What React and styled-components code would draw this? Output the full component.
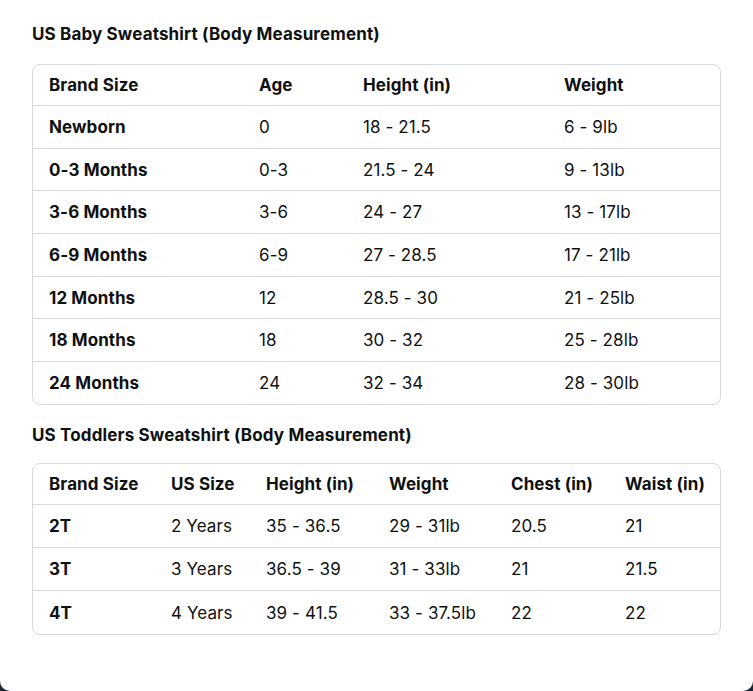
import React from "react";
import styled, { createGlobalStyle } from "styled-components";

const GlobalStyle = createGlobalStyle`
    html, body {
        margin: 0;
        padding: 0;
        background: #1c2631;
    }
`;

const Panel = styled.div`
    box-sizing: border-box;
    width: 753px;
    height: 691px;
    background: #ffffff;
    border-radius: 0 0 10px 10px;
    padding: 24px 32px 0;
    font-family: Inter, "Noto Sans", "Liberation Sans", sans-serif;
    color: #0f1111;
`;

const Heading = styled.h3`
    margin: ${p => (p.$first ? "0" : "20px")} 0 ${p => (p.$first ? "20px" : "18px")};
    font-size: 17px;
    line-height: 20px;
    font-weight: 700;
    letter-spacing: 0.15px;
`;

const TableBox = styled.div`
    border: 1px solid #d5d9d9;
    border-radius: 8px;
    overflow: hidden;
`;

const Table = styled.table`
    width: 100%;
    border-collapse: collapse;
    table-layout: fixed;
    font-size: 17px;
    letter-spacing: 0.1px;
`;

const Row = styled.tr`
    & + & td {
        border-top: 1px solid #d5d9d9;
    }
`;

const HeadCell = styled.th`
    height: 40px;
    padding: 0 0 0 16px;
    text-align: left;
    font-weight: 700;
    white-space: nowrap;
    border-bottom: 1px solid #d5d9d9;
`;

const Cell = styled.td`
    height: ${p => p.$h}px;
    padding: 0 0 0 16px;
    text-align: left;
    font-weight: ${p => (p.$bold ? 700 : 400)};
    white-space: nowrap;
`;

const SizeTable = ({ widths, head, rows, rowHeight }) => (
    <TableBox>
        <Table>
            <colgroup>
                {widths.map((w, i) => (
                    <col key={i} style={{ width: w }} />
                ))}
            </colgroup>
            <thead>
                <tr>
                    {head.map(h => (
                        <HeadCell key={h}>{h}</HeadCell>
                    ))}
                </tr>
            </thead>
            <tbody>
                {rows.map((r, i) => (
                    <Row key={i}>
                        {r.map((c, j) => (
                            <Cell key={j} $h={rowHeight} $bold={j === 0}>{c}</Cell>
                        ))}
                    </Row>
                ))}
            </tbody>
        </Table>
    </TableBox>
);

const babyRows = [
    ["Newborn", "0", "18 - 21.5", "6 - 9lb"],
    ["0-3 Months", "0-3", "21.5 - 24", "9 - 13lb"],
    ["3-6 Months", "3-6", "24 - 27", "13 - 17lb"],
    ["6-9 Months", "6-9", "27 - 28.5", "17 - 21lb"],
    ["12 Months", "12", "28.5 - 30", "21 - 25lb"],
    ["18 Months", "18", "30 - 32", "25 - 28lb"],
    ["24 Months", "24", "32 - 34", "28 - 30lb"],
];

const toddlerRows = [
    ["2T", "2 Years", "35 - 36.5", "29 - 31lb", "20.5", "21"],
    ["3T", "3 Years", "36.5 - 39", "31 - 33lb", "21", "21.5"],
    ["4T", "4 Years", "39 - 41.5", "33 - 37.5lb", "22", "22"],
];

const App = () => (
    <>
        <GlobalStyle />
        <Panel>
            <Heading $first>US Baby Sweatshirt (Body Measurement)</Heading>
            <SizeTable
                widths={[210, 104, 201, 172]}
                head={["Brand Size", "Age", "Height (in)", "Weight"]}
                rows={babyRows}
                rowHeight={41.7}
            />
            <Heading>US Toddlers Sweatshirt (Body Measurement)</Heading>
            <SizeTable
                widths={[122, 95, 123, 122, 114, 111]}
                head={["Brand Size", "US Size", "Height (in)", "Weight", "Chest (in)", "Waist (in)"]}
                rows={toddlerRows}
                rowHeight={42.3}
            />
        </Panel>
    </>
);

export default App;
